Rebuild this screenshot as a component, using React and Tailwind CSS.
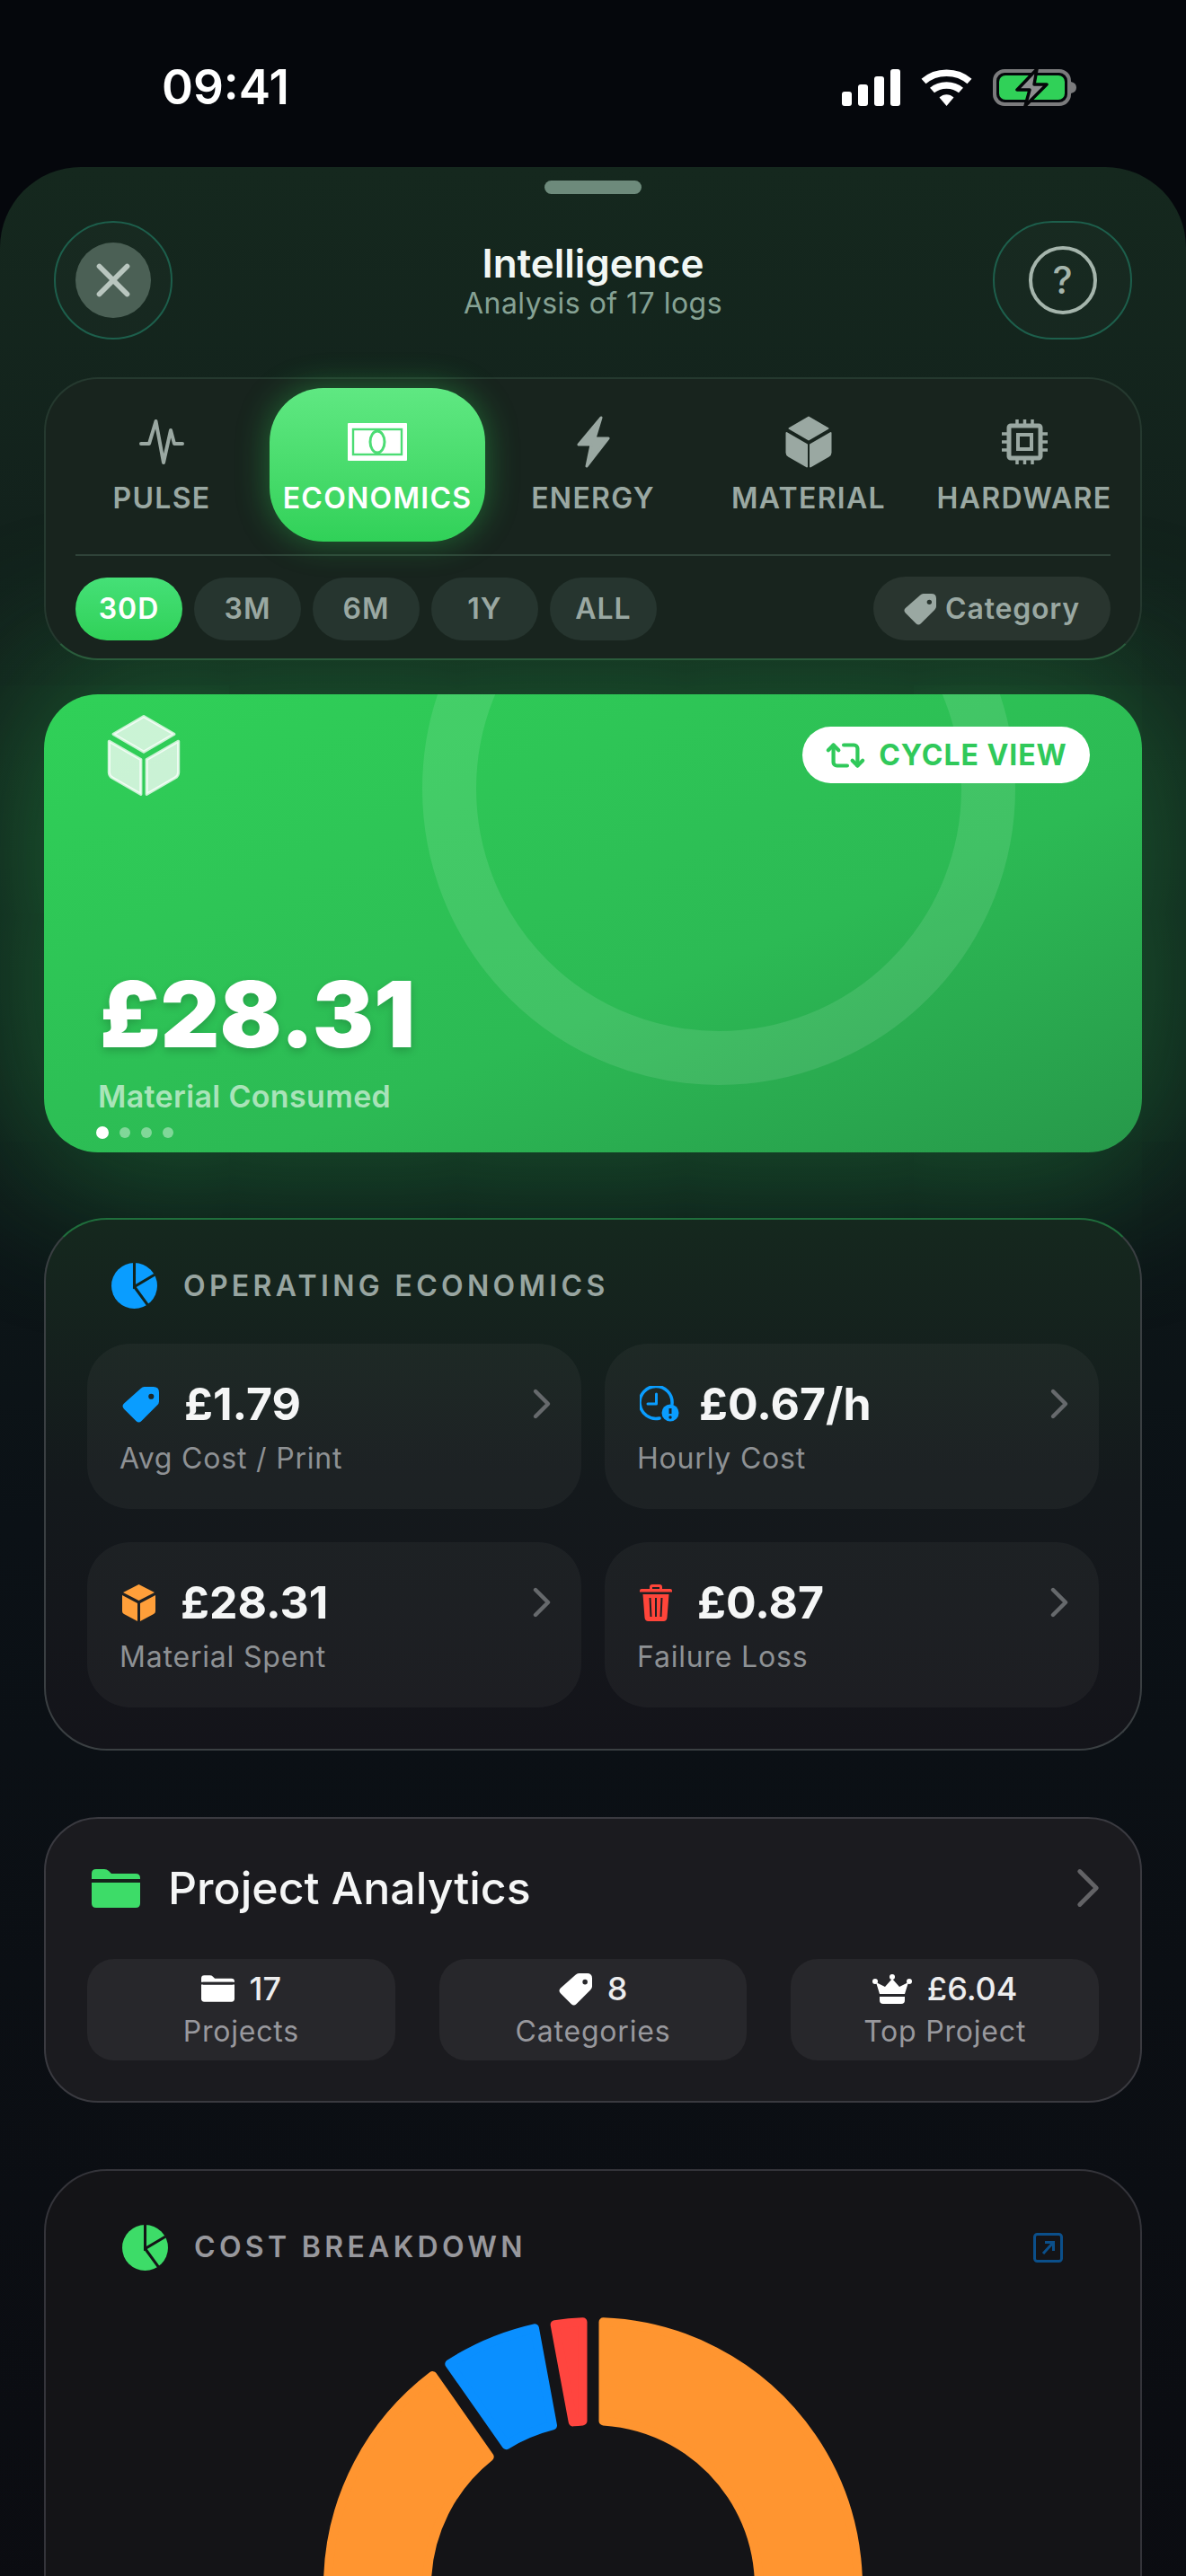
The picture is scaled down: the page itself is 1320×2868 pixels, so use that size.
import { ChevronRight, Repeat2, X } from "lucide-react";

const inter = "font-['Inter','Noto_Sans',sans-serif]";

function Signal() {
  return (
    <svg width="65" height="41" viewBox="0 0 65 41" fill="#fff">
      <rect x="0" y="25" width="11" height="16" rx="3" />
      <rect x="18" y="17" width="11" height="24" rx="3" />
      <rect x="36" y="8" width="11" height="33" rx="3" />
      <rect x="54" y="0" width="11" height="41" rx="3" />
    </svg>
  );
}

function Wifi() {
  return (
    <svg width="57" height="41" viewBox="0 0 57 41" fill="none" stroke="#fff" strokeWidth="7.5">
      <path d="M3 13.5C17 1 40 1 54 13.5" />
      <path d="M12.5 23.5C21 16 36 16 44.5 23.5" />
      <path d="M20.5 31.5L28.5 41L36.5 31.5C32 27 25 27 20.5 31.5Z" fill="#fff" stroke="none" />
    </svg>
  );
}

function Battery() {
  return (
    <svg width="93" height="43" viewBox="0 0 93 43" fill="none">
      <rect x="2" y="3" width="83" height="37" rx="11" stroke="#7b7b7d" strokeWidth="4" />
      <rect x="7" y="8" width="73" height="27" rx="7" fill="#30d158" />
      <path d="M87 15C91 16 93 18 93 21.5C93 25 91 27 87 28Z" fill="#7b7b7d" />
      <path d="M49 1L27 24H41L36 42L60 18H46Z" fill="#8e8e90" stroke="#050609" strokeWidth="3.5" strokeLinejoin="round" />
    </svg>
  );
}

function PulseIcon() {
  return (
    <svg width="50" height="52" viewBox="0 0 50 52" fill="none" stroke="currentColor" strokeWidth="4" strokeLinecap="round" strokeLinejoin="round">
      <path d="M2 28H11L18.5 3L27 49L35 13L39 28H48" />
    </svg>
  );
}

function NoteIcon() {
  return (
    <svg width="66" height="42" viewBox="0 0 66 42">
      <rect width="66" height="42" fill="#fff" rx="1" />
      <rect x="6" y="7" width="54" height="28" fill="none" stroke="#4cdc74" strokeWidth="2.4" />
      <ellipse cx="33" cy="21" rx="8" ry="12" fill="#fff" stroke="#4cdc74" strokeWidth="3" />
    </svg>
  );
}

function BoltIcon() {
  return (
    <svg width="37" height="58" viewBox="0 0 37 58" fill="currentColor" stroke="currentColor" strokeWidth="3" strokeLinejoin="round">
      <path d="M27 2L2 32H16L11 56L35 25H20Z" />
    </svg>
  );
}

function CubeIcon({ w, h }) {
  return (
    <svg width={w} height={h} viewBox="0 0 52 58" fill="currentColor" stroke="currentColor" strokeWidth="2" strokeLinejoin="round">
      <path d="M26 1.5L47.5 14L26 26.5L4.5 14Z" />
      <path d="M1.5 19L24 32V56.5L4 45Q1.5 43.5 1.5 41Z" />
      <path d="M50.5 19L28 32V56.5L48 45Q50.5 43.5 50.5 41Z" />
    </svg>
  );
}

function CpuIcon() {
  return (
    <svg width="51" height="50" viewBox="0 0 51 50" fill="none" stroke="currentColor">
      <rect x="8" y="7" width="35" height="36" rx="2" strokeWidth="5" />
      <rect x="18" y="17" width="15" height="16" strokeWidth="4" />
      <path d="M17 0V5M25.5 0V5M34 0V5M17 45V50M25.5 45V50M34 45V50M0 16H6M0 25H6M0 34H6M45 16H51M45 25H51M45 34H51" strokeWidth="3.5" />
    </svg>
  );
}

function TagIcon({ size = 40 }) {
  return (
    <svg width={size} height={size} viewBox="0 0 40 40" fill="currentColor">
      <path
        fillRule="evenodd"
        d="M24 1H34Q40 1 40 7V17Q40 19 38 21L21 38Q18 41 15 38L2 25Q-1 22 2 19L20 3Q22 1 24 1ZM28.5 11.5a3 3 0 1 0 6 0a3 3 0 1 0 -6 0Z"
      />
    </svg>
  );
}

function PieIcon({ size, color, cut }) {
  return (
    <svg width={size} height={size} viewBox="0 0 50 50">
      <circle cx="25" cy="25" r="25" fill={color} />
      <path d="M25 0V26L47 13M25 26L41 48" fill="none" stroke={cut} strokeWidth="3" />
    </svg>
  );
}

function ClockIcon() {
  return (
    <svg width="44" height="40" viewBox="0 0 44 40" fill="none" className="-mr-[6px]">
      <path d="M36 20A18 18 0 1 0 22 36" stroke="#0a9dff" strokeWidth="3.5" strokeLinecap="round" />
      <path d="M18.5 9V20H9" stroke="#0a9dff" strokeWidth="3" strokeLinecap="round" strokeLinejoin="round" />
      <circle cx="34" cy="30" r="9.5" fill="#0a9dff" />
      <path d="M34 25V31" stroke="#1c2226" strokeWidth="3" />
      <circle cx="34" cy="35" r="1.7" fill="#1c2226" />
    </svg>
  );
}

function OrangeCube() {
  return (
    <svg width="37" height="41" viewBox="0 0 37 41" fill="#ff9f3a">
      <path d="M18.5 0L36 9L18.5 18L1 9Z" />
      <path d="M0 12L17 21V41L2 33Q0 32 0 30Z" />
      <path d="M37 12L20 21V41L35 33Q37 32 37 30Z" />
    </svg>
  );
}

function TrashIcon() {
  return (
    <svg width="36" height="41" viewBox="0 0 36 41" fill="#ff453a">
      <path fillRule="evenodd" d="M11 5V3Q11 0 14 0H22Q25 0 25 3V5H34Q36 5 36 7V8.5H0V7Q0 5 2 5ZM14 5H22V3H14Z" />
      <path fillRule="evenodd" d="M3.5 11H32.5L30.5 37Q30 41 26.5 41H9.5Q6 41 5.5 37ZM10.5 15L11.5 36H13.5L12.5 15ZM17 15V36H19V15ZM23.5 15L22.5 36H24.5L25.5 15Z" />
    </svg>
  );
}

function FolderIcon({ w, h, color, slit }) {
  return (
    <svg width={w} height={h} viewBox="0 0 54 43" fill={color}>
      <path d="M0 5Q0 0 5 0H14Q17 0 19 2L22 5H49Q54 5 54 10V11H0Z" />
      <path d="M0 15H54V38Q54 43 49 43H5Q0 43 0 38Z" />
      <rect x="3" y="11" width="48" height="4" fill={slit} />
    </svg>
  );
}

function CrownIcon() {
  return (
    <svg width="44" height="33" viewBox="0 0 44 33" fill="#fff">
      <circle cx="22" cy="3" r="3" />
      <circle cx="3" cy="8" r="3" />
      <circle cx="41" cy="8" r="3" />
      <path d="M22 5L30 14L40 9L36 22H8L4 9L14 14Z" />
      <path d="M8 25H36V29Q36 33 32 33H12Q8 33 8 29Z" />
    </svg>
  );
}

// annular sector with its edges pulled in, the round stroke gives the soft corners
function sector(from, to, gap, stroke) {
  const cx = 320;
  const cy = 320;
  const rOut = 300 - stroke / 2;
  const rIn = 180 + stroke / 2;
  const off = gap + stroke / 2;
  const pt = (r, deg, side) => {
    const a = (deg * Math.PI) / 180 + side * Math.asin(off / r);
    return `${(cx + r * Math.sin(a)).toFixed(1)} ${(cy - r * Math.cos(a)).toFixed(1)}`;
  };
  const large = to - from > 180 ? 1 : 0;
  return `M${pt(rOut, from, 1)}A${rOut} ${rOut} 0 ${large} 1 ${pt(rOut, to, -1)}L${pt(rIn, to, -1)}A${rIn} ${rIn} 0 ${large} 0 ${pt(rIn, from, 1)}Z`;
}

function Donut() {
  const parts = [
    { from: 0, to: 325, color: "#ff9530" },
    { from: 325, to: 349.5, color: "#0a8fff" },
    { from: 349.5, to: 360, color: "#ff453f" },
  ];
  return (
    <svg width="640" height="640" viewBox="0 0 640 640" className="mx-auto mt-[32px] block">
      {parts.map((p) => (
        <path key={p.from} d={sector(p.from, p.to, 6.5, 10)} fill={p.color} stroke={p.color} strokeWidth="10" strokeLinejoin="round" />
      ))}
    </svg>
  );
}

const tabs = [
  { label: "PULSE", icon: <PulseIcon /> },
  { label: "ECONOMICS", icon: <NoteIcon />, active: true },
  { label: "ENERGY", icon: <BoltIcon /> },
  { label: "MATERIAL", icon: <CubeIcon w={52} h={58} /> },
  { label: "HARDWARE", icon: <CpuIcon /> },
];

const ranges = ["30D", "3M", "6M", "1Y", "ALL"];

const tiles = [
  { icon: <span className="text-[#0a9dff]"><TagIcon size={41} /></span>, value: "£1.79", label: "Avg Cost / Print" },
  { icon: <ClockIcon />, value: "£0.67/h", label: "Hourly Cost" },
  { icon: <OrangeCube />, value: "£28.31", label: "Material Spent" },
  { icon: <TrashIcon />, value: "£0.87", label: "Failure Loss" },
];

const stats = [
  { icon: <FolderIcon w={37} h={30} color="#fff" slit="#27272b" />, value: "17", label: "Projects" },
  { icon: <span className="text-white"><TagIcon size={37} /></span>, value: "8", label: "Categories" },
  { icon: <CrownIcon />, value: "£6.04", label: "Top Project" },
];

export default function App() {
  return (
    <div className={`${inter} h-[2868px] w-[1320px] overflow-hidden bg-[#05070c] text-white`}>
      {/* Status bar */}
      <div className="flex h-[186px] items-start justify-between pl-[180px] pr-[122px] pt-[66px]">
        <span className="text-[53px] font-semibold leading-[62px]">09:41</span>
        <div className="mt-[10px] flex items-center gap-[23px]">
          <Signal />
          <Wifi />
          <Battery />
        </div>
      </div>

      {/* Sheet */}
      <div className="min-h-[2682px] rounded-t-[90px] bg-gradient-to-b from-[#15281e] via-[#0b1116] via-50% to-[#0b0b10] px-[49px]">
        <div className="mx-auto h-[15px] w-[108px] translate-y-[15px] rounded-full bg-[#6d8a7b]" />

        <div className="mx-[11px] mt-[45px] grid h-[132px] grid-cols-[155px_1fr_155px] items-center">
          <button className="flex h-[132px] w-[132px] items-center justify-center rounded-full border-2 border-[#1d5f4c] bg-white/[0.015]">
            <span className="flex h-[84px] w-[84px] items-center justify-center rounded-full bg-[#4b6055] text-[#b9c6bf]">
              <X size={62} strokeWidth={2.2} />
            </span>
          </button>
          <div className="flex flex-col items-center">
            <span className="text-[44px] font-semibold leading-[52px] text-[#f2f7f4]">Intelligence</span>
            <span className="text-[32px] leading-[38px] tracking-[0.015em] text-[#86a294]">Analysis of 17 logs</span>
          </div>
          <button className="flex h-[132px] w-[155px] items-center justify-center rounded-full border-2 border-[#1d5f4c] bg-white/[0.015]">
            <span className="flex h-[76px] w-[76px] items-center justify-center rounded-full border-[4px] border-[#a5b5ac] text-[42px] font-medium leading-none text-[#a5b5ac]">?</span>
          </button>
        </div>

        {/* Tabs and range filter */}
        <div className="relative z-10 mt-[42px] rounded-[60px] border-2 border-[#25392f] border-b-[#2a5c3c] bg-[#18241e] pb-[20px] pt-[10px]">
          <div className="grid grid-cols-5 px-[9px]">
            {tabs.map((t) => (
              <div
                key={t.label}
                className={`flex h-[171px] flex-col items-center pt-[31px] ${
                  t.active
                    ? "rounded-[60px] bg-gradient-to-b from-[#5fe882] to-[#30d158] text-white shadow-[0_0_36px_rgba(48,209,88,0.4)]"
                    : "text-[#9aa8a2]"
                }`}
              >
                <div className="flex h-[58px] items-center justify-center">{t.icon}</div>
                <span className="mt-[14px] text-[32px] font-semibold leading-[40px] tracking-[0.04em]">{t.label}</span>
              </div>
            ))}
          </div>
          <div className="mx-[33px] mt-[14px] h-[2px] bg-[#2f4339]" />
          <div className="mt-[23px] flex items-center px-[33px]">
            <div className="flex gap-[13px]">
              {ranges.map((r, i) => (
                <span
                  key={r}
                  className={`flex h-[70px] w-[119px] items-center justify-center rounded-full text-[32px] font-semibold tracking-[0.03em] ${
                    i === 0 ? "bg-gradient-to-b from-[#45e077] to-[#30d158] text-white" : "bg-[#26352f] text-[#9aa8a2]"
                  }`}
                >
                  {r}
                </span>
              ))}
            </div>
            <span className="ml-auto flex h-[71px] w-[264px] items-center justify-center gap-[10px] rounded-full bg-[#29352f] text-[32px] font-semibold tracking-[0.025em] text-[#9aa8a2]">
              <TagIcon size={36} />
              Category
            </span>
          </div>
        </div>

        {/* Hero card */}
        <div className="relative mt-[38px] flex h-[510px] flex-col justify-between overflow-hidden rounded-[60px] bg-gradient-to-br from-[#30d158] via-[#2cba54] via-60% to-[#27984a] shadow-[0_0_170px_30px_rgba(48,209,88,0.36)]">
          <div className="absolute left-[421px] top-[-225px] h-[660px] w-[660px] rounded-full border-[60px] border-white/10" />
          <div className="relative flex items-start justify-between pl-[70px] pr-[58px] pt-[22px]">
            <span className="text-white/75">
              <CubeIcon w={82} h={92} />
            </span>
            <span className="mt-[14px] flex h-[63px] w-[320px] items-center justify-center gap-[14px] rounded-full bg-white text-[32px] font-bold tracking-[0.03em] text-[#30c95a]">
              <Repeat2 size={46} strokeWidth={2.2} />
              CYCLE VIEW
            </span>
          </div>
          <div className="relative pb-[15px] pl-[60px]">
            <div className="pl-[2px] text-[102px] font-black leading-[100px] [text-shadow:0_4px_10px_rgba(0,0,0,0.18)]">£28.31</div>
            <div className="mt-[22px] text-[34px] font-semibold leading-[40px] tracking-[0.01em] text-white/60">Material Consumed</div>
            <div className="ml-[-2px] mt-[13px] flex items-center gap-[12px]">
              <span className="h-[14px] w-[14px] rounded-full bg-white" />
              <span className="h-[12px] w-[12px] rounded-full bg-white/40" />
              <span className="h-[12px] w-[12px] rounded-full bg-white/40" />
              <span className="h-[12px] w-[12px] rounded-full bg-white/40" />
            </div>
          </div>
        </div>

        {/* Operating economics */}
        <div className="relative mt-[73px] rounded-[70px] border-2 border-[#3a3f42] border-t-[#1f6e3c] bg-gradient-to-b from-[#15281e] via-[#14191c] via-50% to-[#14141a] px-[46px] pb-[46px] pt-[48px]">
          <div className="flex items-center gap-[29px] pl-[27px]">
            <PieIcon size={51} color="#0a9dff" cut="#12241e" />
            <span className="text-[32px] font-semibold leading-[50px] tracking-[0.135em] text-[#98a5a0]">OPERATING ECONOMICS</span>
          </div>
          <div className="mt-[39px] grid grid-cols-2 gap-x-[26px] gap-y-[37px]">
            {tiles.map((t) => (
              <div key={t.label} className="h-[184px] rounded-[48px] bg-white/[0.04] pl-[36px] pr-[37px] pt-[37px]">
                <div className="flex h-[60px] items-center gap-[28px] pl-[3px]">
                  {t.icon}
                  <span className="text-[50px] font-bold leading-[60px] text-[#f5f6f6]">{t.value}</span>
                  <ChevronRight size={56} strokeWidth={1.9} className="-mr-[21px] ml-auto text-[#66696c]" />
                </div>
                <div className="mt-[11px] text-[32px] leading-[40px] tracking-[0.025em] text-[#8e9194]">{t.label}</div>
              </div>
            ))}
          </div>
        </div>

        {/* Project analytics */}
        <div className="mt-[74px] rounded-[60px] border-2 border-[#3a3a40] bg-[#1b1b1f] px-[46px] pb-[45px] pt-[47px]">
          <div className="flex h-[60px] items-center gap-[31px] pl-[5px]">
            <FolderIcon w={54} h={43} color="#3ddc68" slit="#14251a" />
            <span className="text-[50px] font-medium leading-[60px] text-[#f5f6f6]">Project Analytics</span>
            <ChevronRight size={74} strokeWidth={1.6} className="-mr-[25px] ml-auto text-[#636366]" />
          </div>
          <div className="mt-[49px] grid grid-cols-3 gap-x-[49px]">
            {stats.map((s) => (
              <div key={s.label} className="flex h-[113px] flex-col items-center rounded-[30px] bg-[#27272b] pt-[11px]">
                <div className="flex h-[44px] items-center gap-[17px]">
                  {s.icon}
                  <span className="text-[36px] font-medium leading-[44px] text-[#ededee]">{s.value}</span>
                </div>
                <span className="mt-[6px] text-[32px] leading-[40px] tracking-[0.025em] text-[#98989d]">{s.label}</span>
              </div>
            ))}
          </div>
        </div>

        {/* Cost breakdown */}
        <div className="mt-[74px] rounded-[70px] border-2 border-[#34343a] bg-[#141417] pt-[59px]">
          <div className="flex h-[52px] items-center gap-[29px] pl-[85px] pr-[86px]">
            <PieIcon size={51} color="#3ddc68" cut="#141417" />
            <span className="text-[32px] font-semibold tracking-[0.135em] text-[#98989d]">COST BREAKDOWN</span>
            <svg width="33" height="33" viewBox="0 0 33 33" fill="none" stroke="#0b4f8a" strokeWidth="3" className="ml-auto">
              <rect x="1.5" y="1.5" width="30" height="30" rx="3" />
              <path d="M11 23L22 11M13 10.5H22.5V20" />
            </svg>
          </div>
          <Donut />
        </div>
      </div>
    </div>
  );
}
